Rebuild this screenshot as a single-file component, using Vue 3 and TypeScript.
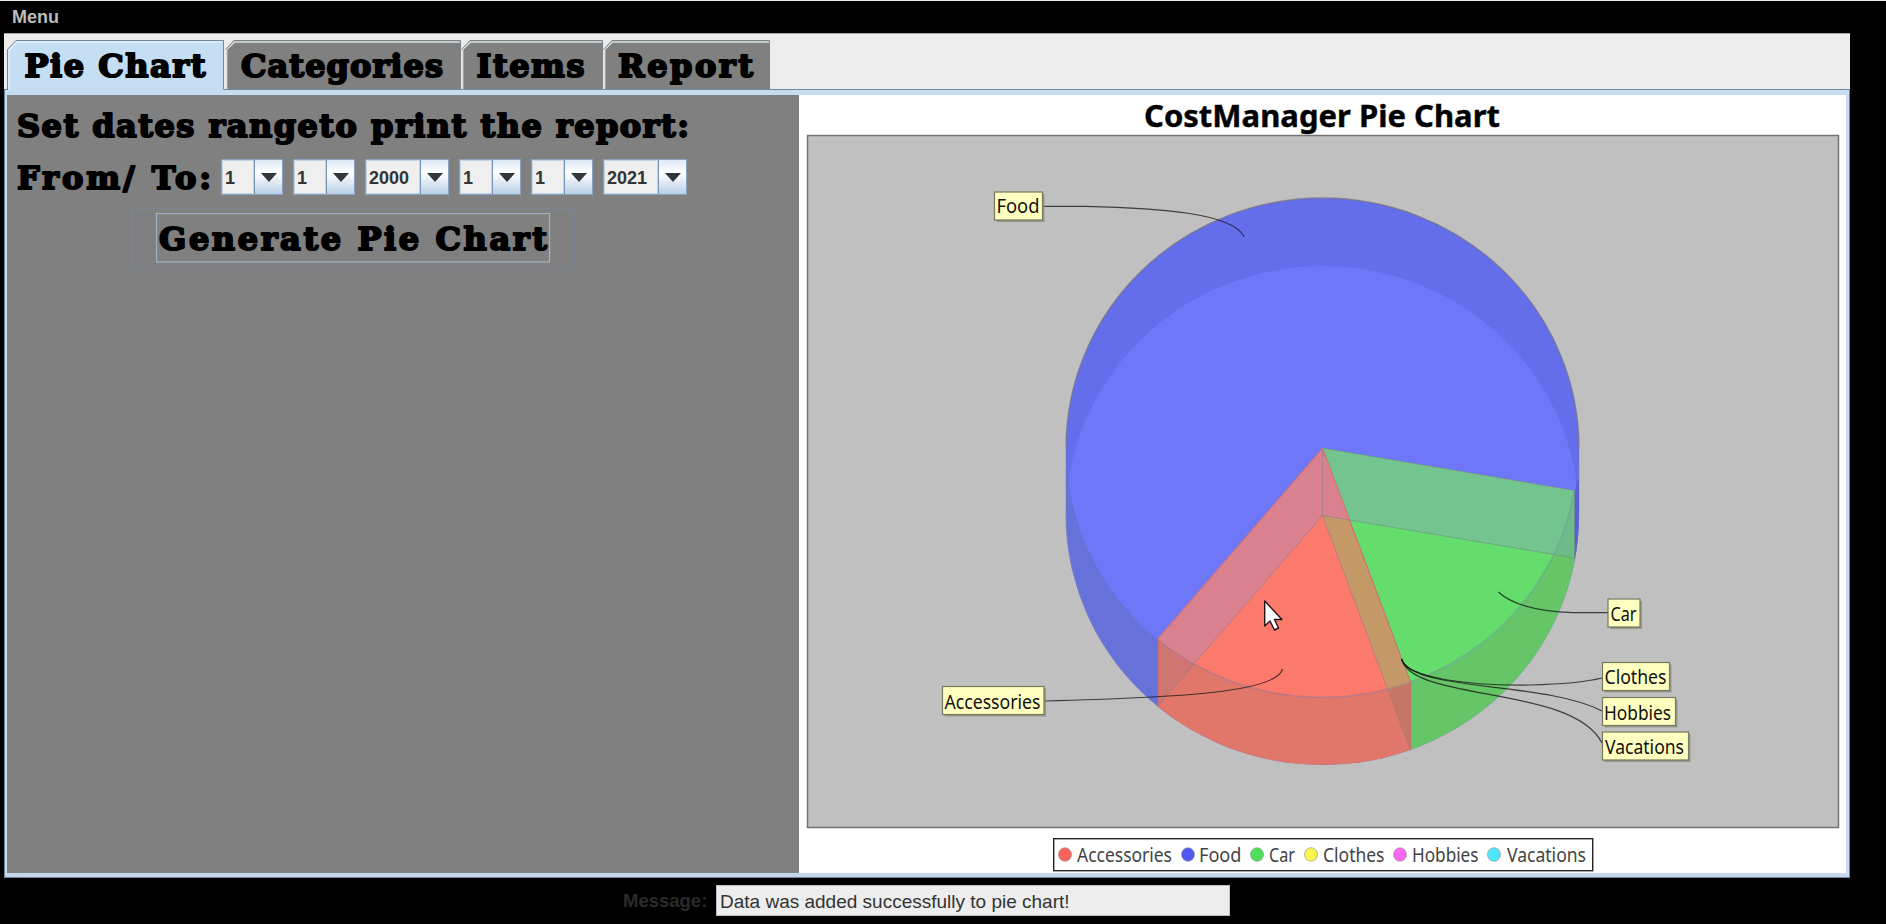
<script setup lang="ts">
interface Tab { label: string; width: number; textX: number; textWidth: number; active?: boolean }
interface SliceLabel { text: string; x: number; y: number; w: number; h: number; tx: number; ty: number; tw: number }
interface LegendItem { text: string; color: string; dot: number; x: number; w: number }

const tabs: Tab[] = [
  { label: 'Pie Chart', width: 217, textX: 17.5, textWidth: 181, active: true },
  { label: 'Categories', width: 236, textX: 16, textWidth: 202 },
  { label: 'Items', width: 142, textX: 15.5, textWidth: 108 },
  { label: 'Report', width: 167, textX: 15, textWidth: 135 },
]

const combos = [
  { value: '1', wide: false },
  { value: '1', wide: false },
  { value: '2000', wide: true },
  { value: '1', wide: false },
  { value: '1', wide: false },
  { value: '2021', wide: true },
]

const labels: SliceLabel[] = [
  { text: 'Food', x: 994.5, y: 192, w: 48, h: 28, tx: 996.5, ty: 213, tw: 43 },
  { text: 'Accessories', x: 942.5, y: 686.5, w: 101.5, h: 28, tx: 944.5, ty: 708.5, tw: 96 },
  { text: 'Car', x: 1608, y: 599, w: 32, h: 28, tx: 1610.5, ty: 620.5, tw: 26 },
  { text: 'Clothes', x: 1602.5, y: 662.5, w: 67, h: 28, tx: 1604.5, ty: 684, tw: 62 },
  { text: 'Hobbies', x: 1602.5, y: 697.5, w: 73, h: 28, tx: 1604, ty: 719.5, tw: 67 },
  { text: 'Vacations', x: 1602.5, y: 732, w: 86, h: 28, tx: 1605, ty: 753.5, tw: 79 },
]

const legend: LegendItem[] = [
  { text: 'Accessories', color: '#f9635a', dot: 1065, x: 1077, w: 95 },
  { text: 'Food', color: '#5358f2', dot: 1188, x: 1199, w: 42.5 },
  { text: 'Car', color: '#4ede57', dot: 1257, x: 1269, w: 26 },
  { text: 'Clothes', color: '#fbf64f', dot: 1311, x: 1323, w: 61.5 },
  { text: 'Hobbies', color: '#fb66f3', dot: 1400, x: 1412, w: 66.5 },
  { text: 'Vacations', color: '#4de6fa', dot: 1494, x: 1507, w: 79 },
]

const leaders = [
  'M1044 206.3 H1085 C1160 208 1232 213 1244 236.5',
  'M1045 701 C1160 698 1277 694 1282.500 669',
  'M1608 612.700 H1573 C1535 611 1510 603 1498.500 592',
  'M1401.600 659 C1406 678 1470 686 1530 685 C1570 684 1590 681 1602 678',
  'M1401.600 659 C1412 692 1545 681 1602 711',
  'M1401.600 659 C1412 702 1573 685 1602 743',
]
</script>

<template>
  <div class="window">
    <header class="menubar">Menu</header>
    <main class="tabbed">
      <nav class="tabs">
        <div v-for="t in tabs" :key="t.label" class="tab" :style="{ width: t.width + 'px' }">
          <svg :width="t.width" height="54" :viewBox="`0 0 ${t.width} 54`">
            <template v-if="t.active">
              <path :d="`M0.5 50 V9.500 L9 0.500 H${t.width - 0.5} V54 H0.500Z`" fill="#c5def4" />
              <path :d="`M0.5 50 V9.500 L9 0.500 H${t.width - 0.5} V49`" fill="none" stroke="#73879f" />
              <path :d="`M2 50 V10 L10 2 H${t.width - 1.5}`" fill="none" stroke="#e3effa" stroke-width="1.500" />
            </template>
            <template v-else>
              <path :d="`M1 49 V9.500 L9 0.500 H${t.width - 0.5} V49Z`" fill="#808080" />
              <path :d="`M1.500 49 V9.500 L9.500 2 H${t.width - 1}`" fill="none" stroke="#dcdfe0" stroke-width="1.700" />
              <path :d="`M0.5 9.500 L9 0.500 H${t.width - 0.5} V49`" fill="none" stroke="#7a8288" />
            </template>
            <text :x="t.textX" y="37" class="cooper" :textLength="t.textWidth">{{ t.label }}</text>
          </svg>
        </div>
      </nav>
      <div class="content">
        <section class="form">
          <svg class="line" width="690" height="38">
            <text x="9" y="33" class="cooper" textLength="672">Set dates rangeto print the report:</text>
          </svg>
          <div class="range">
            <svg class="from" width="206" height="42">
              <text x="0" y="35" class="cooper" textLength="194">From/ To:</text>
            </svg>
            <div class="combos">
              <div v-for="(c, i) in combos" :key="i" class="combo" :class="{ wide: c.wide }">
                <span class="value">{{ c.value }}</span>
                <span class="arrow"><svg width="16" height="9"><path d="M0 0H16L8 9Z" fill="#30363d" /></svg></span>
              </div>
            </div>
          </div>
          <button class="generate">
            <svg width="395" height="50">
              <rect x="0.500" y="0.500" width="393" height="48.500" fill="none" stroke="#a3b1c2" stroke-width="1.200" />
              <text x="3" y="37" class="cooper" textLength="388">Generate Pie Chart</text>
            </svg>
          </button>
        </section>
        <svg class="chart" viewBox="799 95 1047 778" width="1047" height="778">
          <defs>
            <clipPath id="upper"><ellipse cx="1322.500" cy="448" rx="256.500" ry="249.800" /></clipPath>
            <clipPath id="body"><path d="M1066 448 A256.500 250 0 0 1 1579 448 V515 A256.500 250 0 0 1 1066 515Z" /></clipPath>
          </defs>
          <rect x="799" y="95" width="1047" height="778" fill="#fff" />
          <text x="1144" y="126.500" class="title" textLength="356" lengthAdjust="spacingAndGlyphs">CostManager Pie Chart</text>
          <rect x="807.500" y="135.500" width="1031" height="692" fill="#c0c0c0" stroke="#757575" stroke-width="1.500" />

          <g clip-path="url(#body)">
            <rect x="1060" y="190" width="525" height="580" fill="#6771da" />
            <path d="M1574.500 480 H1580 V570 H1574.500Z" fill="#575fdc" />
            <path d="M1322.500 448 L1574.500 490.500 V770 H1410.500 V682Z" fill="#66c566" />
            <path d="M1322.500 448 L1158 640 V770 H1410.500 V682Z" fill="#e0776a" />
            <path d="M1158 630 V706 L1200 657.500Z" fill="#d07672" />
            <path d="M1386 683 L1410.500 682 V750Z" fill="#c67765" />
            <path d="M1540 480 L1574.500 490.500 V558 L1540 552.300Z" fill="#6dbc88" />
          </g>
          <g clip-path="url(#upper)">
            <rect x="1060" y="190" width="525" height="520" fill="#646dea" />
            <ellipse cx="1322.500" cy="516" rx="256.500" ry="250" fill="#6d77f7" />
            <path d="M1322.500 448 L1574.500 490.500 V710 H1410.500 V682Z" fill="#65dd6c" />
            <path d="M1322.500 448 L1574.500 490.500 V558 L1322.500 515.500Z" fill="#74c490" />
            <path d="M1322.500 448 L1158 638 V710 H1410.500 V682Z" fill="#fb7a6c" />
            <path d="M1322.500 448 L1158 638 V706 L1322.500 515.500 L1348 520Z" fill="#d9818f" />
            <path d="M1322.500 515.500 L1348.500 520 L1410.500 682 V750Z" fill="#c59868" />
          </g>
          <g fill="none" stroke="#78788a" stroke-opacity=".45">
            <path d="M1066 448 A256.500 250 0 0 1 1579 448" stroke-opacity=".8" stroke-width="1.300" />
            <path d="M1066 448 V515 M1579 448 V515 A256.500 250 0 0 1 1574.500 558" />
            <path d="M1574.500 490.500 A256.500 250 0 0 1 1158 639.500" />
            <path d="M1322.500 448 V515.500" />
            <path d="M1322.500 448 L1574.500 490.500 V558 L1322.500 515.500 L1158 705.500" />
            <path d="M1322.500 515.500 L1410.500 750" />
          </g>
          <path d="M1322.500 448 L1158 639 V706 M1322.500 448 L1410.500 682 V750" fill="none" stroke="#c26c68" stroke-opacity=".8" />
          <path d="M1066 515 A256.500 250 0 0 0 1158 706" fill="none" stroke="#777dce" />
          <path v-for="d in leaders" :key="d" :d="d" fill="none" stroke="#111" stroke-opacity=".75" stroke-width="1.200" />
          <g v-for="l in labels" :key="l.text">
            <rect :x="l.x + 2" :y="l.y + 2" :width="l.w" :height="l.h" fill="#89897f" opacity=".75" />
            <rect :x="l.x" :y="l.y" :width="l.w" :height="l.h" fill="#ffffc0" stroke="#77775b" stroke-width="1.200" />
            <text :x="l.tx" :y="l.ty" class="small" :textLength="l.tw" lengthAdjust="spacingAndGlyphs">{{ l.text }}</text>
          </g>
          <path d="M1264.700 601 V626 L1270 621 L1274.500 630 L1278.500 628 L1274.500 619.500 H1282Z" fill="#fff" stroke="#241414" stroke-width="1.400" stroke-linejoin="round" />

          <rect x="1053.700" y="838.700" width="539" height="32" fill="#fff" stroke="#222" stroke-width="1.400" />
          <g v-for="i in legend" :key="i.text">
            <ellipse :cx="i.dot" cy="854.500" rx="6.500" ry="6.800" :fill="i.color" stroke="#8a8a8a" stroke-opacity=".6" />
            <text :x="i.x" y="862" class="small legend-text" :textLength="i.w" lengthAdjust="spacingAndGlyphs">{{ i.text }}</text>
          </g>
        </svg>
      </div>
    </main>
    <footer class="status">
      <span class="caption">Message:</span>
      <div class="field">Data was added successfully to pie chart!</div>
    </footer>
  </div>
</template>

<style>
body { background: #000; }
</style>

<style scoped>
.window {
  box-sizing: border-box;
  width: 1886px;
  height: 924px;
  padding-left: 4px;
  overflow: hidden;
  border-top: 1px solid #e8eeee;
  background: #000;
  font-family: "Liberation Sans", Arial, sans-serif;
}
.menubar {
  height: 32px;
  padding-left: 8px;
  line-height: 33px;
  font-size: 18px;
  font-weight: bold;
  color: #bdbdbd;
}
.tabbed {
  box-sizing: border-box;
  width: 1846px;
  height: 845px;
}
.tabs {
  box-sizing: border-box;
  position: relative;
  display: flex;
  height: 56px;
  padding: 6px 0 0 3px;
  background: #ececec;
  border-top: 1px solid #aaa5a5;
}
.tab { position: relative; height: 49px; flex: none; }
.tab:first-child { margin-right: 1px; z-index: 1; }
.tab svg { display: block; overflow: visible; }
.content {
  box-sizing: border-box;
  display: flex;
  height: 789px;
  border: solid #c9dcef;
  border-width: 5px 3px 4px 2px;
  border-bottom-color: #c6d7ea;
  outline: 1px solid #71869f;
  outline-offset: -1px;
  padding: 1px;
  background: #c9dcef;
}
.form {
  box-sizing: border-box;
  flex: none;
  width: 792px;
  height: 778px;
  padding: 9px 0 0 1px;
  background: #808080;
}
.cooper {
  font-family: "DejaVu Serif", serif;
  font-weight: bold;
  font-size: 32px;
  fill: #000;
  stroke: #000;
  stroke-width: 2px;
  stroke-linejoin: round;
}
.line { display: block; overflow: visible; }
.range { display: flex; height: 54px; padding: 12px 0 0 9px; box-sizing: border-box; }
.from { flex: none; margin-right: -2px; overflow: visible; }
.combos { display: flex; gap: 10px; padding-top: 5px; }
.combo {
  box-sizing: border-box;
  display: flex;
  width: 62px;
  height: 36px;
  border: 1px solid #89a3c1;
  background: #efefef;
}
.combo.wide { width: 84px; }
.value {
  flex: 1;
  box-sizing: border-box;
  padding-left: 2px;
  border: 1px solid #bfd5ea;
  line-height: 34px;
  font-size: 18px;
  font-weight: bold;
  color: #333;
}
.arrow {
  display: flex;
  width: 27px;
  align-items: center;
  justify-content: center;
  border-left: 1px solid #7593b5;
  background: linear-gradient(#dce9f6, #fff 38%, #b9cfe7);
}
.generate {
  display: block;
  box-sizing: border-box;
  width: 443px;
  height: 62px;
  margin: 12px 0 0 124px;
  padding: 4px 0 6px 23px;
  border: 1px solid #7b8594;
  background: #808080;
  text-align: left;
}
.generate svg { display: block; }
.chart { display: block; flex: none; width: 1047px; }
.title {
  font-family: "Noto Sans", sans-serif;
  font-weight: bold;
  font-size: 30.5px;
  stroke: #000;
  stroke-width: 0.4px;
}
.small { font-family: "Noto Sans", sans-serif; font-size: 19.5px; fill: #111; }
.legend-text { fill: #444; }
.status { display: flex; padding-top: 7px; align-items: center; }
.caption {
  width: 93px;
  padding-left: 619px;
  font-size: 18.5px;
  font-weight: bold;
  color: #2b2b2b;
}
.field {
  box-sizing: border-box;
  width: 514px;
  height: 31px;
  padding-left: 3px;
  border: 1px solid #b8c0cb;
  background: #ededed;
  color: #333;
  font-size: 19px;
  line-height: 31px;
  white-space: nowrap;
}
</style>
